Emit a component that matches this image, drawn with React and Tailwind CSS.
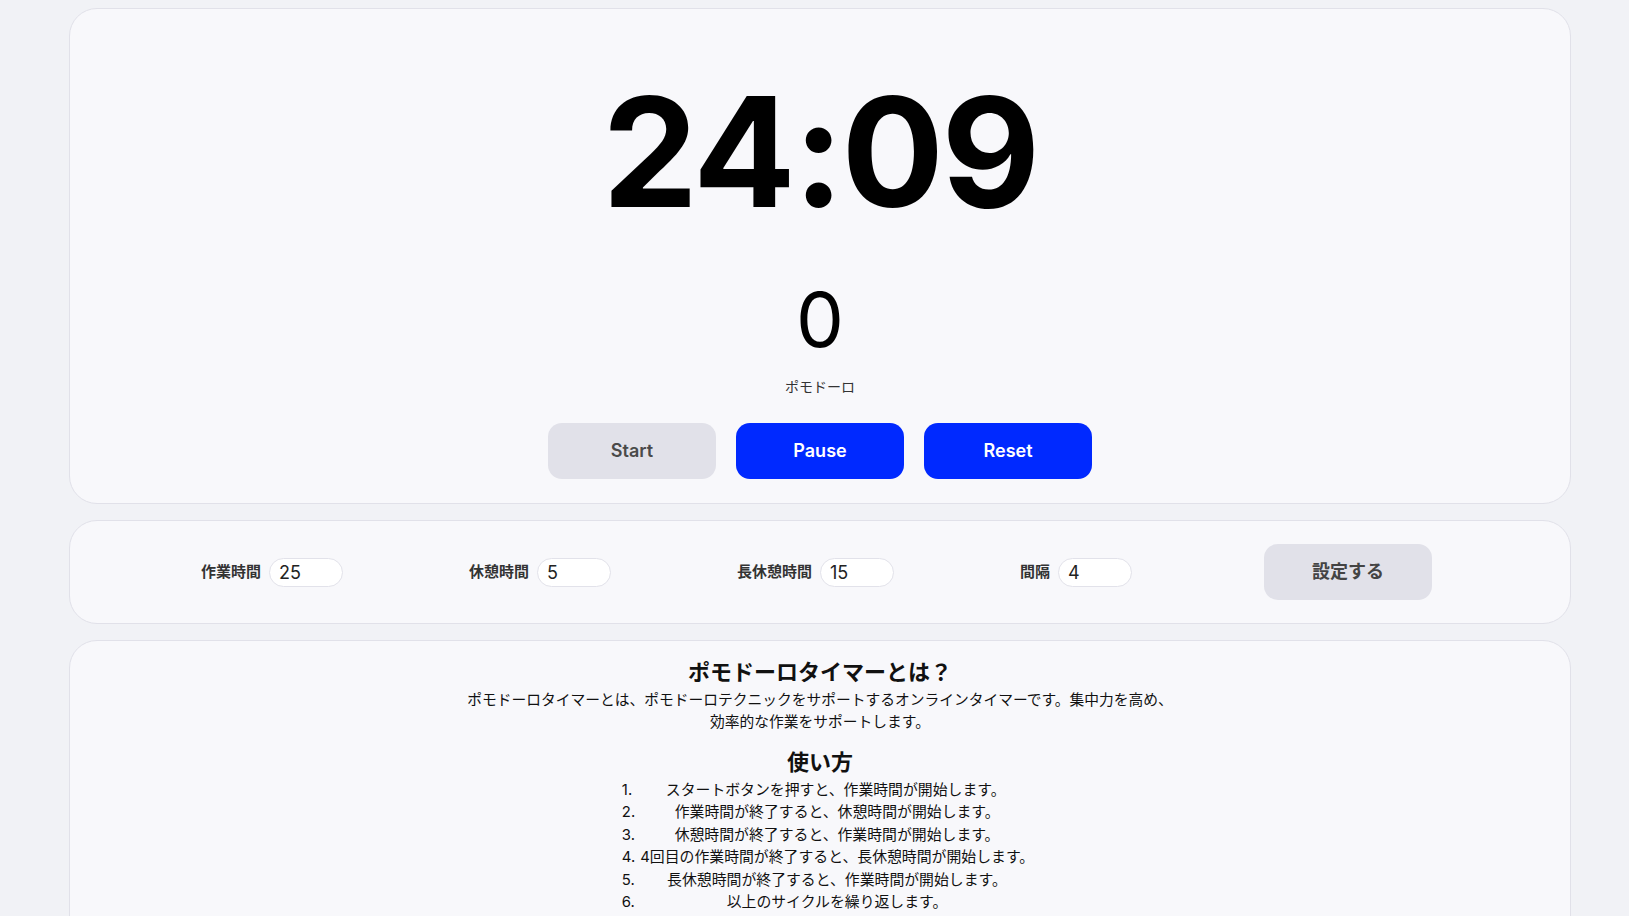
import React from "react";

const font = { fontFamily: 'Inter, "Noto Sans CJK JP", sans-serif' };

function Field({ label, value }) {
  return (
    <div className="flex items-center gap-2">
      <span className="text-[15px] font-semibold text-[#333]">{label}</span>
      <input
        type="text"
        defaultValue={value}
        className="w-[74px] h-[29px] rounded-full border border-[#e2e2ea] bg-white pl-[9px] text-[18px] text-[#222] outline-none"
      />
    </div>
  );
}

const steps = [
  "スタートボタンを押すと、作業時間が開始します。",
  "作業時間が終了すると、休憩時間が開始します。",
  "休憩時間が終了すると、作業時間が開始します。",
  "4回目の作業時間が終了すると、長休憩時間が開始します。",
  "長休憩時間が終了すると、作業時間が開始します。",
  "以上のサイクルを繰り返します。",
];

export default function App() {
  return (
    <div className="min-h-screen bg-[#f1f2f6] pt-2 pb-10" style={font}>
      <div className="ml-[69px] w-[1502px] flex flex-col gap-4">
        {/* Timer card */}
        <div className="rounded-[28px] border border-[#e1e1e9] bg-[#f8f8fb] flex flex-col items-center pt-[67px] pb-[24px]">
          <div className="text-[152px] leading-none font-bold tracking-[-2.5px] text-black">24:09</div>
          <div className="mt-[53px] text-[76px] leading-none font-normal text-black">0</div>
          <div className="mt-5 text-sm leading-5 text-[#333]">ポモドーロ</div>
          <div className="mt-[26px] flex gap-5">
            <button className="w-[168px] h-14 rounded-[14px] bg-[#e1e1e9] text-[#4a4a4a] text-lg font-semibold">Start</button>
            <button className="w-[168px] h-14 rounded-[14px] bg-[#0029ff] text-white text-lg font-semibold">Pause</button>
            <button className="w-[168px] h-14 rounded-[14px] bg-[#0029ff] text-white text-lg font-semibold">Reset</button>
          </div>
        </div>

        {/* Settings card */}
        <div className="rounded-[28px] border border-[#e1e1e9] bg-[#f8f8fb] flex items-center gap-[126px] pl-[131px] py-[23px]">
          <Field label="作業時間" value="25" />
          <Field label="休憩時間" value="5" />
          <Field label="長休憩時間" value="15" />
          <Field label="間隔" value="4" />
          <button className="ml-[6px] w-[168px] h-14 rounded-[14px] bg-[#e1e1e9] text-[#444] text-lg font-semibold">設定する</button>
        </div>

        {/* Description card */}
        <div className="rounded-[28px] border border-[#e1e1e9] bg-[#f8f8fb] flex flex-col items-center pt-[15px] pb-10 text-[#111]">
          <h2 className="text-[22px] leading-[33px] font-bold">ポモドーロタイマーとは？</h2>
          <p className="max-w-[716px] text-center text-[14.75px] leading-[22px]">
            ポモドーロタイマーとは、ポモドーロテクニックをサポートするオンラインタイマーです。集中力を高め、効率的な作業をサポートします。
          </p>
          <h2 className="mt-[13px] text-[22px] leading-[33px] font-bold">使い方</h2>
          <ol className="w-fit mx-auto pl-4 text-[14.875px] leading-[22.4px]">
            {steps.map((s, i) => (
              <li key={i} className="flex">
                <span className="mr-[5px]">{i + 1}.</span>
                <span className="flex-1 text-center">{s}</span>
              </li>
            ))}
          </ol>
        </div>
      </div>
    </div>
  );
}
